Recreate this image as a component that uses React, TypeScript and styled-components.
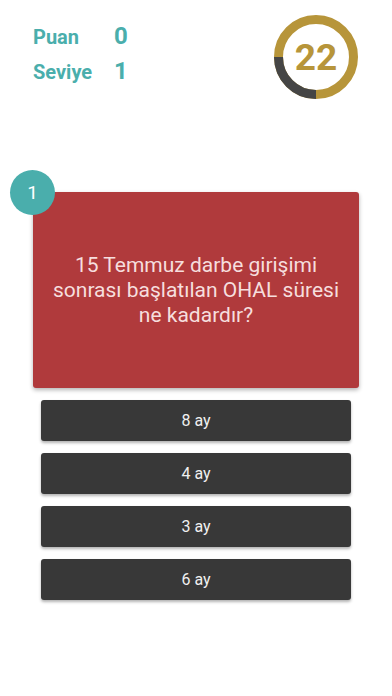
import React from "react";
import styled, { createGlobalStyle } from "styled-components";

const colors = {
  teal: "#4aaeac",
  gold: "#b7953a",
  ringDark: "#454545",
  red: "#b03a3c",
  questionText: "#f6dede",
  button: "#383838",
  buttonText: "#f0f0f0",
};

const GlobalStyle = createGlobalStyle`
  html, body {
    margin: 0;
    padding: 0;
    background: #ffffff;
  }
  body {
    font-family: Roboto, "Noto Sans", "Liberation Sans", sans-serif;
  }
`;

const answers = ["8 ay", "4 ay", "3 ay", "6 ay"];

const TimerRing = ({ seconds }: { seconds: number }) => {
  const size = 84;
  const stroke = 9;
  const r = (size - stroke) / 2;
  const c = 2 * Math.PI * r;
  // dark arc covers the bottom-left quarter (6 to 9 o'clock)
  return (
    <TimerBox>
      <svg width={size} height={size} viewBox={`0 0 ${size} ${size}`}>
        <circle
          cx={size / 2}
          cy={size / 2}
          r={r}
          fill="none"
          stroke={colors.gold}
          strokeWidth={stroke}
        />
        <circle
          cx={size / 2}
          cy={size / 2}
          r={r}
          fill="none"
          stroke={colors.ringDark}
          strokeWidth={stroke}
          strokeDasharray={`${c / 4} ${c}`}
          transform={`rotate(90 ${size / 2} ${size / 2})`}
        />
      </svg>
      <TimerValue>{seconds}</TimerValue>
    </TimerBox>
  );
};

export default function App() {
  return (
    <>
      <GlobalStyle />
      <Screen>
        <Header>
          <Stats>
            <StatLabel>Puan</StatLabel>
            <StatValue>0</StatValue>
            <StatLabel>Seviye</StatLabel>
            <StatValue>1</StatValue>
          </Stats>
          <TimerRing seconds={22} />
        </Header>

        <QuestionCard>
          <QuestionBadge>1</QuestionBadge>
          <QuestionText>
            15 Temmuz darbe girişimi sonrası başlatılan OHAL süresi ne kadardır?
          </QuestionText>
        </QuestionCard>

        <Answers>
          {answers.map((a) => (
            <AnswerButton key={a}>{a}</AnswerButton>
          ))}
        </Answers>
      </Screen>
    </>
  );
}

const Screen = styled.div`
  width: 392px;
  min-height: 696px;
  display: flex;
  flex-direction: column;
  align-items: center;
  background: #ffffff;
`;

const Header = styled.div`
  width: 100%;
  box-sizing: border-box;
  display: flex;
  justify-content: space-between;
  align-items: flex-start;
  padding: 15px 34px 0 33px;
`;

const Stats = styled.div`
  margin-top: 4px;
  display: grid;
  grid-template-columns: 81px auto;
  align-items: baseline;
`;

const StatLabel = styled.span`
  font-size: 20px;
  font-weight: 700;
  line-height: 34px;
  color: ${colors.teal};
`;

const StatValue = styled.span`
  font-size: 24px;
  font-weight: 700;
  line-height: 34px;
  color: ${colors.teal};
`;

const TimerBox = styled.div`
  position: relative;
  width: 84px;
  height: 84px;
  svg {
    display: block;
  }
`;

const TimerValue = styled.div`
  position: absolute;
  inset: 0;
  display: flex;
  align-items: center;
  justify-content: center;
  font-size: 37px;
  font-weight: 700;
  color: ${colors.gold};
`;

const QuestionCard = styled.div`
  position: relative;
  margin-top: 93px;
  width: 326px;
  height: 196px;
  box-sizing: border-box;
  padding: 0 14px;
  display: flex;
  align-items: center;
  justify-content: center;
  background: ${colors.red};
  border-radius: 3px;
  box-shadow: 0 2px 4px rgba(0, 0, 0, 0.3);
`;

const QuestionBadge = styled.div`
  position: absolute;
  left: -23px;
  top: -22px;
  width: 45px;
  height: 45px;
  border-radius: 50%;
  background: ${colors.teal};
  color: #ffffff;
  font-size: 19px;
  display: flex;
  align-items: center;
  justify-content: center;
`;

const QuestionText = styled.p`
  margin: 0;
  text-align: center;
  font-size: 21px;
  line-height: 25px;
  color: ${colors.questionText};
`;

const Answers = styled.div`
  margin-top: 12px;
  display: flex;
  flex-direction: column;
  gap: 12px;
`;

const AnswerButton = styled.button`
  width: 310px;
  height: 41px;
  border: none;
  border-radius: 3px;
  background: ${colors.button};
  color: ${colors.buttonText};
  font-family: Roboto, "Noto Sans", "Liberation Sans", sans-serif;
  font-size: 16px;
  box-shadow: 0 2px 3px rgba(0, 0, 0, 0.3);
  cursor: pointer;
`;
